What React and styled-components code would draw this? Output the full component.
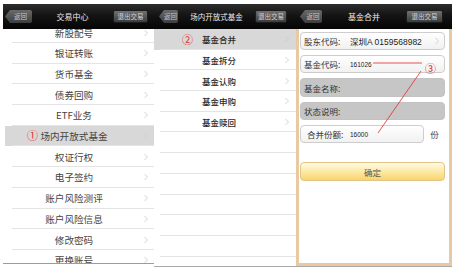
import styled, { createGlobalStyle } from 'styled-components';

const GlobalStyle = createGlobalStyle`
  body {
    margin: 0;
    background: #fff;
    font-family: "Noto Sans CJK SC", "Liberation Sans", sans-serif;
  }
`;

const Page = styled.div`
  width: 454px;
  height: 271px;
  display: flex;
  overflow: hidden;
  background: #fff;
`;

const Phone = styled.section`
  position: relative;
  width: ${(p) => p.$w}px;
  height: ${(p) => p.$h}px;
  flex-shrink: 0;
  box-sizing: border-box;
  padding: 4px 0 0 ${(p) => p.$pl || 0}px;
  display: flex;
  flex-direction: column;
  border-bottom: ${(p) => (p.$line ? '1px solid #a8a8a8' : 'none')};
`;

const TopBar = styled.header`
  height: 25px;
  flex-shrink: 0;
  display: flex;
  align-items: center;
  padding: 0 ${(p) => p.$pr}px 0 ${(p) => p.$pl}px;
  background: linear-gradient(#2c2c2c, #141414 45%, #050505);
`;

const BackButton = styled.button`
  width: ${(p) => p.$w}px;
  height: 13px;
  padding: 0 0 0 4px;
  border: none;
  font-family: inherit;
  font-size: 6.5px;
  line-height: 13px;
  color: #c8c8c8;
  background: linear-gradient(#6a6a6a, #3e3e3e);
  clip-path: polygon(5px 0, 100% 0, 100% 100%, 5px 100%, 0 50%);
  border-radius: 0 2px 2px 0;
`;

const ExitButton = styled.button`
  width: ${(p) => p.$w}px;
  height: 13px;
  padding: 0;
  border: 1px solid #1c1c1c;
  border-radius: 2px;
  font-family: inherit;
  font-size: 6.5px;
  line-height: 11px;
  color: #d4d4d4;
  background: linear-gradient(#707070, #3c3c3c);
`;

const Title = styled.h1`
  flex: 1;
  margin: 0;
  text-align: center;
  font-size: ${(p) => p.$size}px;
  font-weight: 400;
  color: #ececec;
`;

const List = styled.ul`
  flex: 1;
  margin: 0;
  padding: 0;
  list-style: none;
  overflow: hidden;
  border-bottom: ${(p) => (p.$line ? '1px solid #9c9c9c' : 'none')};
`;

const ListInner = styled.div`
  margin-top: ${(p) => -p.$scroll}px;
`;

const Row = styled.li`
  position: relative;
  height: 20.7px;
  box-sizing: border-box;
  margin-left: ${(p) => p.$ml || 0}px;
  padding-right: ${(p) => p.$pr}px;
  display: flex;
  align-items: center;
  background: ${(p) => (p.$active ? '#d8d8d8' : '#fff')};

  &::after {
    content: '';
    position: absolute;
    left: ${(p) => p.$sep}px;
    right: 0;
    bottom: 0;
    height: 1px;
    background: #e4e4e4;
  }
`;

const RowText = styled.span`
  flex: 1;
  text-align: center;
  font-size: ${(p) => p.$size}px;
  color: ${(p) => p.$color};
  font-weight: ${(p) => p.$weight || 400};
`;

const Mark = styled.span`
  position: absolute;
  left: ${(p) => p.$x}px;
  top: ${(p) => p.$y}px;
  font-size: 11px;
  line-height: 1;
  color: #e8262a;
`;

const ChevronIcon = () => (
  <svg width="6" height="8" viewBox="0 0 6 8">
    <polyline points="1.5,1 4.5,4 1.5,7" fill="none" stroke="#c8c8c8" strokeWidth="0.8" />
  </svg>
);

const FormBody = styled.div`
  flex: 1;
  position: relative;
  display: flex;
  flex-direction: column;
  gap: 5px;
  padding: 3px 4px 0 1px;
  border: 3px solid #e9c9a2;
  border-top: none;
  background: #fff;
`;

const Field = styled.div`
  width: ${(p) => (p.$w ? `${p.$w}px` : 'auto')};
  height: ${(p) => p.$h || 18}px;
  flex-shrink: 0;
  box-sizing: border-box;
  display: flex;
  align-items: center;
  padding: 0 4px 0 ${(p) => p.$pl || 3}px;
  border: 1px solid ${(p) => (p.$gray ? '#c2c2c2' : '#cdcdcd')};
  border-radius: 4px;
  background: ${(p) => (p.$gray ? '#c6c6c6' : 'linear-gradient(#ffffff, #f1f1f1)')};
  font-size: 8.5px;
  color: #333;
`;

const Label = styled.span`
  width: ${(p) => p.$w || 46}px;
  flex-shrink: 0;
`;

const Value = styled.span`
  flex: 1;
  font-family: "Liberation Sans", "Noto Sans CJK SC", sans-serif;
  font-size: ${(p) => p.$size}px;
  color: #222;
`;

const ShareRow = styled.div`
  display: flex;
  align-items: center;
`;

const Unit = styled.span`
  flex: 1;
  text-align: center;
  font-size: 8.5px;
  color: #444;
`;

const Confirm = styled.button`
  margin-top: 14px;
  height: 19px;
  border: 1px solid #e3c488;
  border-radius: 4px;
  font-family: inherit;
  font-size: 8.5px;
  color: #555;
  background: linear-gradient(#fffbe4, #fde9a6 50%, #f8d56c);
`;

const Annotation = styled.svg`
  position: absolute;
  left: 0;
  top: 0;
  pointer-events: none;
`;

const menu = [
  '新股配号', '银证转账', '货币基金', '债券回购', 'ETF业务', '场内开放式基金',
  '权证行权', '电子签约', '账户风险测评', '账户风险信息', '修改密码', '更换账号',
];

const funds = ['基金合并', '基金拆分', '基金认购', '基金申购', '基金赎回', '', '', '', '', '', '', ''];

export default function App() {
  return (
    <>
      <GlobalStyle />
      <Page>
        <Phone $w={154} $h={264} $pl={3}>
          <TopBar $pl={2} $pr={6}>
            <BackButton $w={27}>返回</BackButton>
            <Title $size={8}>交易中心</Title>
            <ExitButton $w={35}>退出交易</ExitButton>
          </TopBar>
          <List $line>
            <ListInner $scroll={6.7}>
              {menu.map((item, i) => (
                <Row key={item} $ml={2} $pr={5} $sep={7} $active={i === 5}>
                  {i === 5 && <Mark $x={22} $y={4}>①</Mark>}
                  <RowText $size={9.6} $color="#444">{item}</RowText>
                  <ChevronIcon />
                </Row>
              ))}
            </ListInner>
          </List>
        </Phone>

        <Phone $w={142} $h={267} $line>
          <TopBar $pl={5} $pr={9}>
            <BackButton $w={19}>返回</BackButton>
            <Title $size={7.5}>场内开放式基金</Title>
            <ExitButton $w={32}>退出交易</ExitButton>
          </TopBar>
          <List>
            {funds.map((item, i) => (
              <Row key={i} $pr={6} $sep={6} $active={i === 0}>
                {i === 0 && <Mark $x={28} $y={5}>②</Mark>}
                <RowText $size={8.5} $color="#2a2a2a" $weight={500}>{item}</RowText>
                {item && <ChevronIcon />}
              </Row>
            ))}
          </List>
        </Phone>

        <Phone $w={156} $h={267} $line>
          <TopBar $pl={4} $pr={9}>
            <BackButton $w={22}>返回</BackButton>
            <Title $size={8}>基金合并</Title>
            <ExitButton $w={37}>退出交易</ExitButton>
          </TopBar>
          <FormBody>
            <Field>
              <Label>股东代码:</Label>
              <Value $size={8.5}>深圳A 0159568982</Value>
              <ChevronIcon />
            </Field>
            <Field>
              <Label>基金代码:</Label>
              <Value $size={6.5}>161026</Value>
            </Field>
            <Field $gray $h={19}>
              <Label>基金名称:</Label>
            </Field>
            <Field $gray>
              <Label>状态说明:</Label>
            </Field>
            <ShareRow>
              <Field $w={124} $pl={6}>
                <Label $w={43}>合并份额:</Label>
                <Value $size={6.5}>16000</Value>
              </Field>
              <Unit>份</Unit>
            </ShareRow>
            <Confirm>确定</Confirm>
            <Annotation width="152" height="236" viewBox="0 0 152 236">
              <line x1="74" y1="34" x2="123" y2="34" stroke="#e8262a" strokeWidth="0.8" />
              <line x1="122" y1="42" x2="79" y2="104" stroke="#e8262a" strokeWidth="0.8" />
            </Annotation>
            <Mark $x={126} $y={34}>③</Mark>
          </FormBody>
        </Phone>
      </Page>
    </>
  );
}
